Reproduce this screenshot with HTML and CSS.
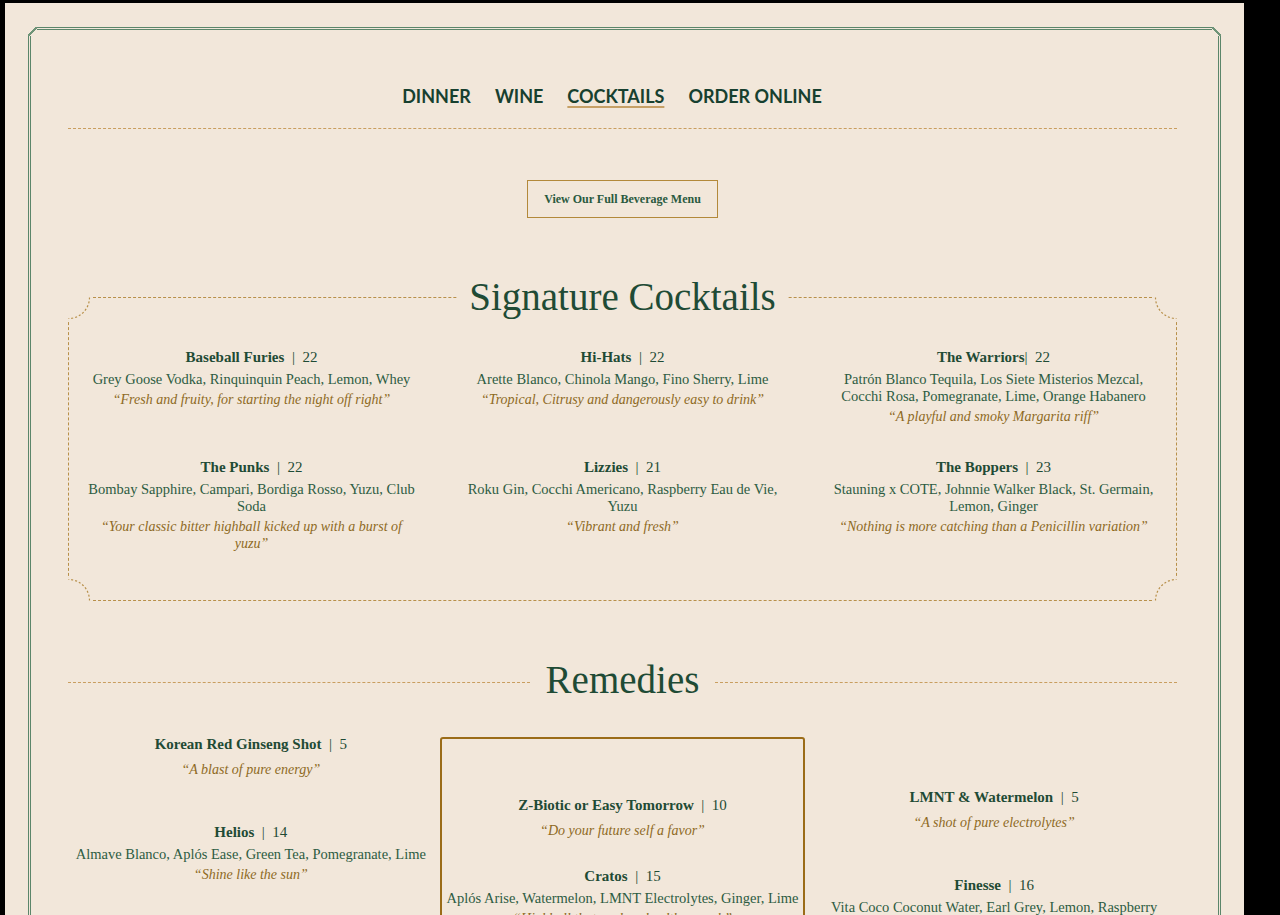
FILE: index.html
```html
<!DOCTYPE html>
<html lang="en">
<head>
<meta charset="utf-8">
<title>Cocktails</title>
<link rel="stylesheet" href="styles.css">
</head>
<body>
<div class="page">
  <div class="frame">
    <nav class="nav">
      <a href="#">Dinner</a>
      <a href="#">Wine</a>
      <a href="#" class="active">Cocktails</a>
      <a href="#">Order Online</a>
    </nav>
    <div class="rule"></div>
    <div class="btn-wrap"><a class="btn" href="#">View Our Full Beverage Menu</a></div>

    <section class="sig">
      <h2 class="sig-title"><span>Signature Cocktails</span></h2>
      <div class="grid">
        <div class="item">
          <div class="name">Baseball Furies <span class="price">&nbsp;|&nbsp; 22</span></div>
          <p class="ing">Grey Goose Vodka, Rinquinquin Peach, Lemon, Whey</p>
          <p class="quote">“Fresh and fruity, for starting the night off right”</p>
        </div>
        <div class="item">
          <div class="name">Hi-Hats <span class="price">&nbsp;|&nbsp; 22</span></div>
          <p class="ing">Arette Blanco, Chinola Mango, Fino Sherry, Lime</p>
          <p class="quote">“Tropical, Citrusy and dangerously easy to drink”</p>
        </div>
        <div class="item">
          <div class="name">The Warriors<span class="price">| &nbsp;22</span></div>
          <p class="ing">Patrón Blanco Tequila, Los Siete Misterios Mezcal, Cocchi Rosa, Pomegranate, Lime, Orange Habanero</p>
          <p class="quote">“A playful and smoky Margarita riff”</p>
        </div>
        <div class="item">
          <div class="name">The Punks <span class="price">&nbsp;|&nbsp; 22</span></div>
          <p class="ing">Bombay Sapphire, Campari, Bordiga Rosso, Yuzu, Club Soda</p>
          <p class="quote">“Your classic bitter highball kicked up with a burst of yuzu”</p>
        </div>
        <div class="item">
          <div class="name">Lizzies <span class="price">&nbsp;|&nbsp; 21</span></div>
          <p class="ing">Roku Gin, Cocchi Americano, Raspberry Eau de Vie, Yuzu</p>
          <p class="quote">“Vibrant and fresh”</p>
        </div>
        <div class="item">
          <div class="name">The Boppers <span class="price">&nbsp;|&nbsp; 23</span></div>
          <p class="ing">Stauning x COTE, Johnnie Walker Black, St. Germain, Lemon, Ginger</p>
          <p class="quote">“Nothing is more catching than a Penicillin variation”</p>
        </div>
      </div>
      <svg class="corner tl" width="23" height="23" viewBox="0 0 23 23" aria-hidden="true"><rect width="23" height="23" fill="#f2e7da"/><path d="M21.5 0.5 A21 21 0 0 1 0.5 21.5" fill="none" stroke="#b8904a" stroke-width="1.2" stroke-dasharray="2 2"/></svg>
      <svg class="corner tr" width="23" height="23" viewBox="0 0 23 23" aria-hidden="true"><rect width="23" height="23" fill="#f2e7da"/><path d="M21.5 0.5 A21 21 0 0 1 0.5 21.5" fill="none" stroke="#b8904a" stroke-width="1.2" stroke-dasharray="2 2"/></svg>
      <svg class="corner bl" width="23" height="23" viewBox="0 0 23 23" aria-hidden="true"><rect width="23" height="23" fill="#f2e7da"/><path d="M21.5 0.5 A21 21 0 0 1 0.5 21.5" fill="none" stroke="#b8904a" stroke-width="1.2" stroke-dasharray="2 2"/></svg>
      <svg class="corner br" width="23" height="23" viewBox="0 0 23 23" aria-hidden="true"><rect width="23" height="23" fill="#f2e7da"/><path d="M21.5 0.5 A21 21 0 0 1 0.5 21.5" fill="none" stroke="#b8904a" stroke-width="1.2" stroke-dasharray="2 2"/></svg>
    </section>

    <section class="rem">
      <div class="rem-head">
        <span class="line"></span>
        <h2>Remedies</h2>
        <span class="line"></span>
      </div>
      <div class="rem-grid">
        <div class="col col1">
          <div class="item">
            <div class="name">Korean Red Ginseng Shot <span class="price">&nbsp;|&nbsp; 5</span></div>
            <p class="quote solo">“A blast of pure energy”</p>
          </div>
          <div class="item">
            <div class="name">Helios <span class="price">&nbsp;|&nbsp; 14</span></div>
            <p class="ing">Almave Blanco, Aplós Ease, Green Tea, Pomegranate, Lime</p>
            <p class="quote">“Shine like the sun”</p>
          </div>
        </div>
        <div class="col col2">
          <div class="item">
            <div class="name">Z-Biotic or Easy Tomorrow <span class="price">&nbsp;|&nbsp; 10</span></div>
            <p class="quote solo">“Do your future self a favor”</p>
          </div>
          <div class="item">
            <div class="name">Cratos <span class="price">&nbsp;|&nbsp; 15</span></div>
            <p class="ing">Aplós Arise, Watermelon, LMNT Electrolytes, Ginger, Lime</p>
            <p class="quote">“Highball that packs a healthy punch”</p>
          </div>
        </div>
        <div class="col col3">
          <div class="item">
            <div class="name">LMNT &amp; Watermelon <span class="price">&nbsp;|&nbsp; 5</span></div>
            <p class="quote solo">“A shot of pure electrolytes”</p>
          </div>
          <div class="item">
            <div class="name">Finesse <span class="price">&nbsp;|&nbsp; 16</span></div>
            <p class="ing">Vita Coco Coconut Water, Earl Grey, Lemon, Raspberry</p>
            <p class="quote">“Light, bright and refreshing”</p>
          </div>
        </div>
      </div>
    </section>
  </div>
</div>
</body>
</html>
```

FILE: styles.css
```css
html, body {
  margin: 0;
  height: 100%;
  background: #000;
  overflow: hidden;
}

.page {
  margin: 3px 36px 0 5px;
  background: #f2e7da;
  padding: 24px 23px 0;
  min-height: 1100px;
}

.frame {
  position: relative;
  border: 3px double #5b866a;
  border-bottom: none;
  padding: 0 41px 80px 37px;
  min-height: 1000px;
}

.frame::before,
.frame::after {
  content: "";
  position: absolute;
  top: -3px;
  width: 9px;
  height: 9px;
}

.frame::before {
  left: -3px;
  background: linear-gradient(to bottom right, #f2e7da 0 42%, #6f9478 42% 60%, #f2e7da 60%);
}

.frame::after {
  right: -3px;
  background: linear-gradient(to bottom left, #f2e7da 0 42%, #6f9478 42% 60%, #f2e7da 60%);
}

/* nav */
.nav {
  display: flex;
  justify-content: center;
  gap: 24px;
  padding: 54px 21px 0 0;
}

.nav a {
  font-family: "Lato", "Liberation Sans", sans-serif;
  font-weight: 700;
  font-size: 18px;
  line-height: 24px;
  text-transform: uppercase;
  color: #17402f;
  text-decoration: none;
}

.nav a.active {
  text-decoration: underline;
  text-decoration-color: #c6a066;
  text-decoration-thickness: 2px;
  text-underline-offset: 3px;
}

.rule {
  margin-top: 20px;
  border-top: 1px dashed #c99e5f;
}

.btn-wrap {
  margin-top: 51px;
  text-align: center;
}

.btn {
  display: inline-block;
  border: 1px solid #b3893a;
  padding: 0 16px;
  line-height: 36px;
  font-family: "Liberation Serif", serif;
  font-weight: 700;
  font-size: 12px;
  color: #2a5a3e;
  text-decoration: none;
}

/* signature */
.sig {
  position: relative;
  margin-top: 79px;
  border: 1px dashed #b8904a;
  padding: 0 0 48px;
}

.sig-title {
  margin: -24px 0 0;
  display: flex;
  justify-content: center;
  font-family: "Liberation Serif", serif;
  font-weight: 400;
  font-size: 39px;
  line-height: 46px;
  color: #1f4b35;
}

.sig-title span {
  background: #f2e7da;
  padding: 0 12px;
}

.corner {
  position: absolute;
  display: block;
}

.corner.tl { top: -1px; left: -1px; }
.corner.tr { top: -1px; right: -1px; transform: scaleX(-1); }
.corner.bl { bottom: -1px; left: -1px; transform: scaleY(-1); }
.corner.br { bottom: -1px; right: -1px; transform: scale(-1, -1); }

.grid {
  margin-top: 27px;
  display: grid;
  grid-template-columns: repeat(3, 1fr);
  column-gap: 6px;
  row-gap: 32px;
}

.item {
  text-align: center;
  font-family: "Liberation Serif", serif;
}

.grid .item {
  padding: 0 17px;
}

.name {
  font-size: 15px;
  font-weight: 700;
  line-height: 20px;
  color: #1f4b35;
}

.price {
  font-weight: 400;
}

.ing {
  margin: 4px 0 0;
  font-size: 14.5px;
  line-height: 17px;
  color: #2d5c42;
}

.quote {
  margin: 3px 0 0;
  font-size: 14px;
  font-style: italic;
  line-height: 17px;
  color: #8e6a1f;
}

.quote.solo {
  margin-top: 7px;
}

/* remedies */
.rem {
  margin-top: 56px;
}

.rem-head {
  display: flex;
  align-items: center;
}

.rem-head .line {
  flex: 1;
  border-top: 1px dashed #c99e5f;
  margin-top: 4px;
}

.rem-head h2 {
  margin: 0 16px;
  font-family: "Liberation Serif", serif;
  font-weight: 400;
  font-size: 39px;
  line-height: 46px;
  color: #1f4b35;
}

.rem-grid {
  margin-top: 31px;
  display: grid;
  grid-template-columns: repeat(3, 1fr);
  column-gap: 6px;
  align-items: start;
}

.col {
  display: flex;
  flex-direction: column;
  gap: 44px;
}

.col2 {
  margin-top: 3px;
  border: 2px solid #9b6c18;
  border-radius: 3px;
  padding: 56px 2px 40px;
  gap: 27px;
}

.col3 {
  padding-top: 53px;
}
```
